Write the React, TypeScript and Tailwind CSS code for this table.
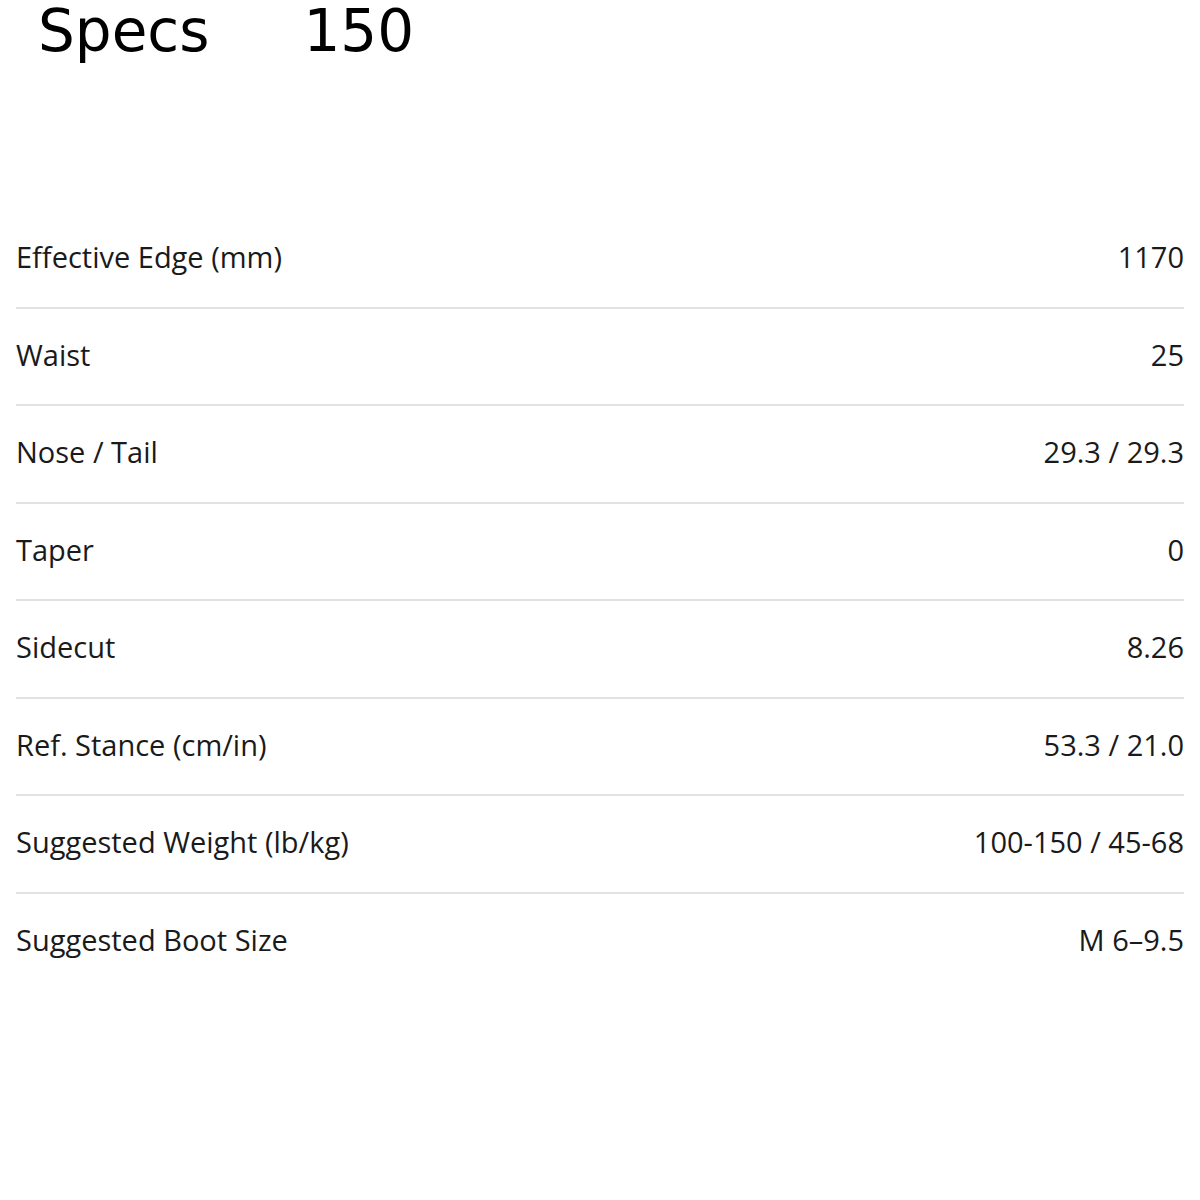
import React from "react";

const rows: [string, string][] = [
  ["Effective Edge (mm)", "1170"],
  ["Waist", "25"],
  ["Nose / Tail", "29.3 / 29.3"],
  ["Taper", "0"],
  ["Sidecut", "8.26"],
  ["Ref. Stance (cm/in)", "53.3 / 21.0"],
  ["Suggested Weight (lb/kg)", "100-150 / 45-68"],
  ["Suggested Boot Size", "M 6–9.5"],
];

export default function App() {
  return (
    <div className="w-[1200px] h-[1200px] bg-white">
      <div
        className="flex items-baseline pl-[38px] text-[58px] leading-[62px] text-black"
        style={{ fontFamily: '"DejaVu Sans", Verdana, sans-serif' }}
      >
        <span>Specs</span>
        <span className="ml-[94px]">150</span>
      </div>
      <div
        className="mt-[149px] px-4 text-[29px] leading-[32px] text-[#1a1a1a]"
        style={{ fontFamily: '"Open Sans", Lato, sans-serif' }}
      >
        {rows.map(([k, v], i) => (
          <div
            key={k}
            className={
              "flex justify-between pt-[30px] pb-[33.5px] " +
              (i < rows.length - 1 ? "border-b-2 border-[#e2e2e2]" : "")
            }
          >
            <span>{k}</span>
            <span>{v}</span>
          </div>
        ))}
      </div>
    </div>
  );
}
